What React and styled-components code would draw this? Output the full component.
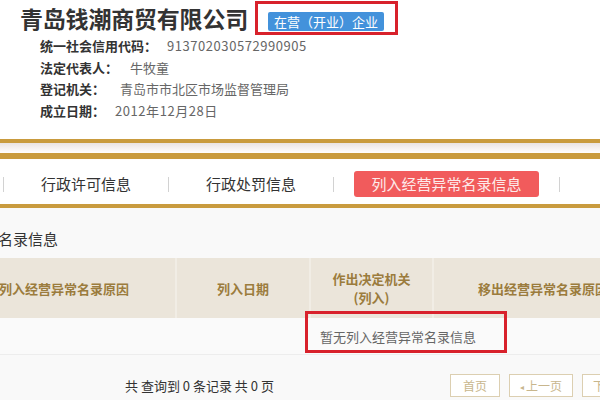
import React from "react";
import styled, { createGlobalStyle } from "styled-components";

const GlobalStyle = createGlobalStyle`
  html, body {
    margin: 0;
    padding: 0;
    background: #fff;
  }
  body {
    font-family: "Microsoft YaHei", "Noto Sans CJK SC", sans-serif;
    color: #333;
  }
`;

const Page = styled.div`
  width: 600px;
  height: 400px;
  overflow: hidden;
  background: #fff;
`;

const Header = styled.div`
  padding: 1px 0 0 20px;
`;

const TitleRow = styled.div`
  display: flex;
  align-items: center;
  height: 34px;
`;

const Title = styled.h1`
  margin: 0;
  font-size: 23px;
  line-height: 30px;
  font-weight: 700;
  color: #333;
  letter-spacing: -0.2px;
`;

const Highlight = styled.div`
  border: 3px solid #d8212b;
  box-sizing: border-box;
`;

const BadgeBox = styled(Highlight)`
  margin-left: 7px;
  height: 34px;
  padding: 4px 11px 0 10px;
`;

const Badge = styled.span`
  display: inline-block;
  height: 19px;
  line-height: 19px;
  padding: 0 6px;
  background: #4392db;
  color: #fff;
  font-size: 13px;
  border-radius: 2px;
`;

const InfoList = styled.div`
  padding-left: 20px;
`;

const InfoRow = styled.div`
  display: flex;
  height: 21.5px;
  line-height: 21.5px;
  font-size: 13px;
`;

const Label = styled.span`
  font-weight: 700;
  color: #333;
  margin-right: ${(p) => p.$gap || 10}px;
`;

const Value = styled.span`
  color: #666;
  letter-spacing: ${(p) => (p.$wide ? "0.55px" : "0")};
`;

const TopRule = styled.div`
  margin-top: 18px;
  height: 4px;
  background: #c99b3e;
`;

const RuleGap = styled.div`
  height: 10px;
  background: linear-gradient(#e9e3e3, #f7f4f4 60%, #fff);
`;

const TabBar = styled.div`
  display: flex;
  align-items: center;
  height: 40px;
  padding: 5px 0 0 3px;
  border-top: 6px solid #c99b3e;
  border-bottom: 4px solid #c99b3e;
  background: #fff;
`;

const Separator = styled.span`
  width: 1px;
  height: 15px;
  background: #d2d2d2;
`;

const TabItem = styled.div`
  padding: 0 20px;
`;

const TabLabel = styled.span`
  display: block;
  height: 26px;
  line-height: 26px;
  padding: 0 ${(p) => (p.$active ? 17.5 : 17)}px;
  font-size: 15px;
  border-radius: 3px;
  color: ${(p) => (p.$active ? "#fdeaea" : "#333")};
  background: ${(p) => (p.$active ? "#f15b5c" : "transparent")};
`;

const Content = styled.div`
  background: #f9f9f9;
  padding-top: 22px;
  height: 200px;
`;

const SectionTitle = styled.div`
  font-size: 15px;
  line-height: 18px;
  color: #333;
  margin-left: -2px;
`;

const Table = styled.div`
  margin: 10px 0 0 -47px;
  width: 699px;
`;

const HeadRow = styled.div`
  display: grid;
  grid-template-columns: 222px 134px 123px 220px;
  height: 60px;
  background: #ebe5da;
`;

const HeadCell = styled.div`
  display: flex;
  align-items: center;
  justify-content: center;
  text-align: center;
  font-size: 13px;
  line-height: 19px;
  font-weight: 700;
  color: #9b7c3d;
  border-left: ${(p) => (p.$first ? "none" : "2px solid #f1ede5")};
`;

const BodyRow = styled.div`
  display: grid;
  grid-template-columns: 222px 134px 123px 220px;
  height: 36px;
  background: #fafafa;
  border-bottom: 1px solid #ededed;
`;

const EmptyCell = styled.div`
  position: relative;
  grid-column: 3 / 5;
  padding-left: 11px;
  line-height: 38px;
  font-size: 13px;
  color: #666;
`;

const EmptyMark = styled(Highlight)`
  position: absolute;
  left: -4px;
  top: -7px;
  width: 202px;
  height: 42px;
`;

const Pager = styled.div`
  display: flex;
  align-items: center;
  height: 23px;
  margin-top: 19px;
`;

const PagerInfo = styled.div`
  flex: 0 0 450px;
  padding-left: 125px;
  box-sizing: border-box;
  font-size: 13px;
  color: #333;
`;

const PageButton = styled.span`
  flex: none;
  height: 23px;
  line-height: 21px;
  margin-right: 9px;
  padding: 0 ${(p) => p.$pad || 12}px;
  border: 1px solid #dccfb1;
  box-sizing: border-box;
  background: #fff;
  color: #c8b68d;
  font-size: 12px;
`;

const Arrow = styled.span`
  font-size: 8px;
  margin-right: 2px;
  vertical-align: 1px;
`;

export default function App() {
  return (
    <Page>
      <GlobalStyle />
      <Header>
        <TitleRow>
          <Title>青岛钱潮商贸有限公司</Title>
          <BadgeBox>
            <Badge>在营（开业）企业</Badge>
          </BadgeBox>
        </TitleRow>
        <InfoList>
          <InfoRow>
            <Label>统一社会信用代码：</Label>
            <Value $wide>913702030572990905</Value>
          </InfoRow>
          <InfoRow>
            <Label $gap={12}>法定代表人：</Label>
            <Value>牛牧童</Value>
          </InfoRow>
          <InfoRow>
            <Label $gap={15}>登记机关：</Label>
            <Value>青岛市市北区市场监督管理局</Value>
          </InfoRow>
          <InfoRow>
            <Label>成立日期：</Label>
            <Value $wide>2012年12月28日</Value>
          </InfoRow>
        </InfoList>
      </Header>

      <TopRule />
      <RuleGap />
      <TabBar>
        <Separator />
        <TabItem>
          <TabLabel>行政许可信息</TabLabel>
        </TabItem>
        <Separator />
        <TabItem>
          <TabLabel>行政处罚信息</TabLabel>
        </TabItem>
        <Separator />
        <TabItem>
          <TabLabel $active>列入经营异常名录信息</TabLabel>
        </TabItem>
        <Separator />
      </TabBar>

      <Content>
        <SectionTitle>名录信息</SectionTitle>
        <Table>
          <HeadRow>
            <HeadCell $first>列入经营异常名录原因</HeadCell>
            <HeadCell>列入日期</HeadCell>
            <HeadCell>
              作出决定机关
              <br />
              (列入)
            </HeadCell>
            <HeadCell>移出经营异常名录原因</HeadCell>
          </HeadRow>
          <BodyRow>
            <EmptyCell>
              暂无列入经营异常名录信息
              <EmptyMark />
            </EmptyCell>
          </BodyRow>
        </Table>
        <Pager>
          <PagerInfo>共 查询到 0 条记录 共 0 页</PagerInfo>
          <PageButton>首页</PageButton>
          <PageButton $pad={10}>
            <Arrow>◂</Arrow>上一页
          </PageButton>
          <PageButton $pad={10}>下一页</PageButton>
        </Pager>
      </Content>
    </Page>
  );
}
